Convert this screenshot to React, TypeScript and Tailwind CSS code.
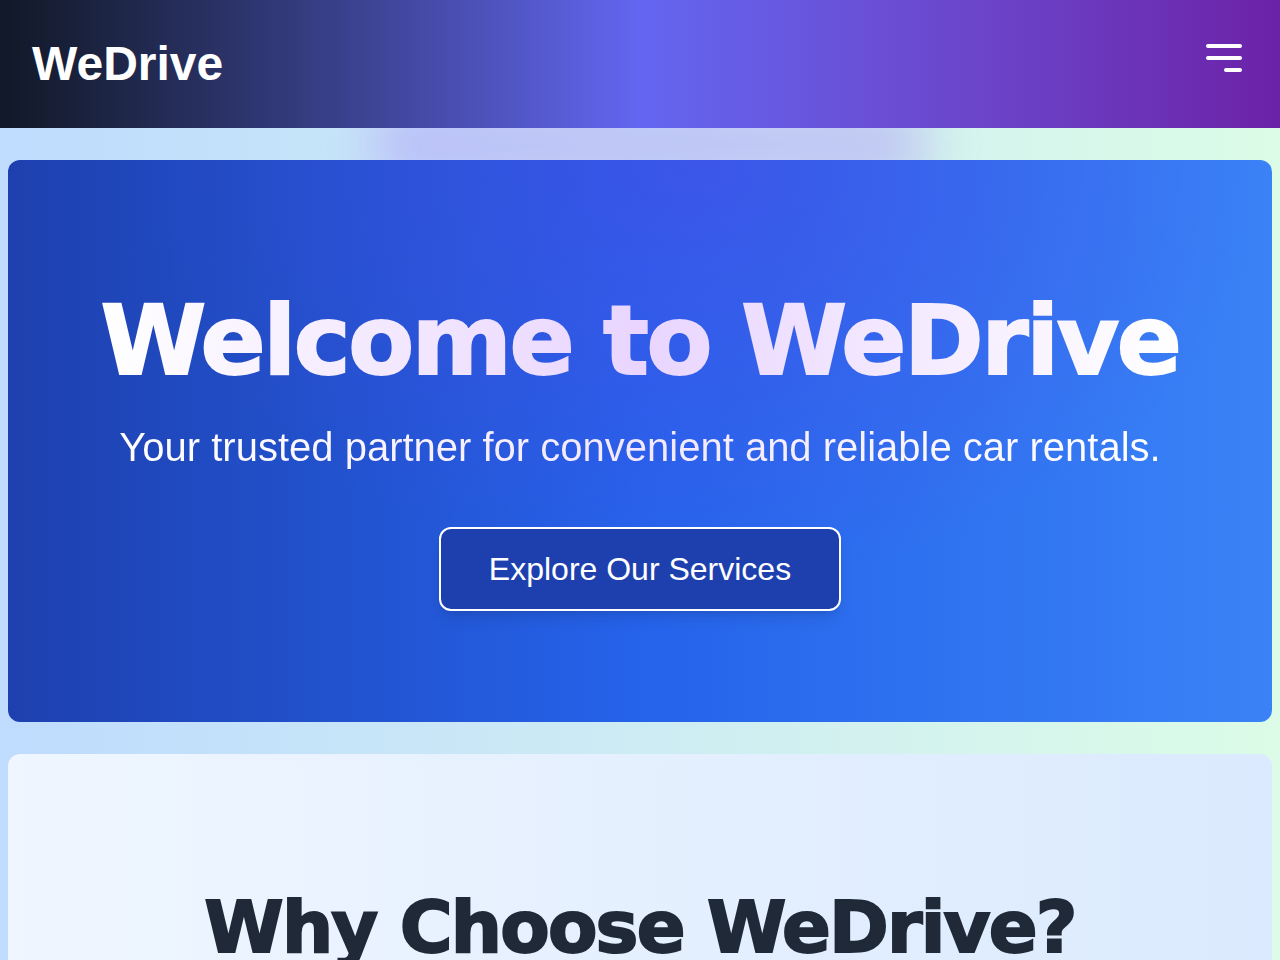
import React from "react";

const features = [
  { title: "Wide Selection", text: "Choose from economy cars to luxury SUVs for any trip." },
  { title: "Best Prices", text: "Transparent pricing with no hidden fees, ever." },
  { title: "24/7 Support", text: "Our team is always here to help you on the road." },
];

export default function App() {
  return (
    <div
      className="relative min-h-screen bg-gradient-to-r from-[#bfdbfe] to-[#dcfce7] overflow-hidden"
      style={{ fontFamily: '"Liberation Sans", Arial, sans-serif' }}
    >
      <div className="absolute top-[100px] left-[370px] w-[560px] h-[90px] rounded-full bg-[#a78bfa]/40 blur-xl" />
      <header className="relative z-20 h-32 flex items-center justify-between px-8 bg-gradient-to-r from-[#111827] via-[#6366f1] to-[#6b21a8]">
        <h1 className="text-5xl leading-none font-bold text-white">WeDrive</h1>
        <button className="mb-3 p-1.5" aria-label="Menu">
          <svg width="36" height="28" viewBox="0 0 36 28" fill="white">
            <rect x="0" y="0" width="36" height="4" rx="2" />
            <rect x="0" y="12" width="36" height="4" rx="2" />
            <rect x="18" y="24" width="18" height="4" rx="2" />
          </svg>
        </button>
      </header>

      <main className="relative z-10 flex flex-col gap-8 px-2 py-8">
        <section className="relative overflow-hidden rounded-xl bg-gradient-to-r from-[#1e40af] via-[#2563eb] to-[#3b82f6] pt-[121px] pb-[111px] text-center">
          <div className="absolute inset-0 bg-[radial-gradient(ellipse_45%_75%_at_55%_0%,rgba(79,70,229,0.5),transparent)]" />
          <div className="relative flex flex-col items-center">
            <h2
              className="text-8xl leading-tight font-bold tracking-tight bg-gradient-to-r from-white via-[#e9d5ff] to-white bg-clip-text text-transparent [-webkit-text-stroke:2px_transparent]"
              style={{ fontFamily: '"DejaVu Sans", sans-serif' }}
            >
              Welcome to WeDrive
            </h2>
            <p className="mt-4 text-[40px] leading-normal bg-gradient-to-r from-white via-[#f3e8ff] to-white bg-clip-text text-transparent">
              Your trusted partner for convenient and reliable car rentals.
            </p>
            <button className="mt-[50px] px-12 py-4 text-[32px] leading-normal text-white bg-[#1e40af] border-2 border-white rounded-xl shadow-lg">
              Explore Our Services
            </button>
          </div>
        </section>

        <section className="rounded-xl bg-gradient-to-r from-[#eff6ff] to-[#dbeafe] pt-32 pb-24 px-12 text-center">
          <h2
            className="text-7xl leading-tight font-bold tracking-tight text-[#1f2937] [-webkit-text-stroke:2px_#1f2937]"
            style={{ fontFamily: '"DejaVu Sans", sans-serif' }}
          >
            Why Choose WeDrive?
          </h2>
          <div className="mt-12 grid grid-cols-3 gap-8">
            {features.map((f) => (
              <div key={f.title} className="rounded-xl bg-white p-8 shadow-md">
                <h3 className="text-2xl font-bold text-[#1f2937]">{f.title}</h3>
                <p className="mt-3 text-lg text-gray-600">{f.text}</p>
              </div>
            ))}
          </div>
        </section>
      </main>
    </div>
  );
}
